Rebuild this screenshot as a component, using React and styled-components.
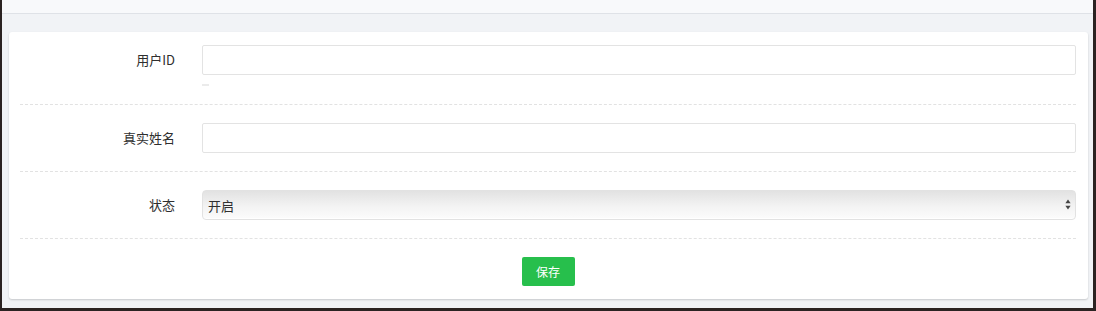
import styled, { createGlobalStyle } from 'styled-components';

const GlobalStyle = createGlobalStyle`
  html, body {
    margin: 0;
    padding: 0;
    background: #2b2322;
  }
  body {
    font-family: "Noto Sans CJK SC", "Noto Sans", sans-serif;
  }
`;

const Frame = styled.div`
  box-sizing: border-box;
  width: 1096px;
  height: 311px;
  border-left: 2px solid #2b2322;
  border-right: 3px solid #2b2322;
  border-bottom: 3px solid #2b2322;
  background: #f1f3f6;
  display: flex;
  flex-direction: column;
`;

const TopBar = styled.div`
  height: 13px;
  flex-shrink: 0;
  background: #f8f9fb;
  border-bottom: 1px solid #dfe2e7;
`;

const Content = styled.div`
  flex: 1;
  padding: 18px 5px 10px 7px;
  display: flex;
  flex-direction: column;
`;

const Card = styled.div`
  flex: 1;
  background: #fff;
  border-radius: 3px;
  box-shadow: 0 1px 2px rgba(0, 0, 0, 0.18);
  padding: 13px 12px 13px 11px;
`;

const FormGroup = styled.div`
  display: flex;
  align-items: flex-start;
  gap: 27px;
  padding-bottom: 18px;
  margin-bottom: 18px;
  border-bottom: 1px dashed #e2e2e2;
`;

const Label = styled.label`
  width: 155px;
  flex-shrink: 0;
  height: 30px;
  line-height: 30px;
  text-align: right;
  font-size: 13px;
  color: #2f2f2f;
`;

const Field = styled.div`
  flex: 1;
  display: flex;
  flex-direction: column;
`;

const Input = styled.input`
  box-sizing: border-box;
  width: 100%;
  height: 30px;
  border: 1px solid #e3e3e3;
  border-radius: 2px;
  background: #fff;
  outline: none;
  padding: 0 6px;
  font: inherit;
  font-size: 13px;
`;

const HelpDash = styled.div`
  margin-top: 9px;
  width: 7px;
  height: 2px;
  background: #ebebeb;
`;

const SelectWrap = styled.div`
  position: relative;
  height: 30px;
`;

const Select = styled.select`
  appearance: none;
  box-sizing: border-box;
  width: 100%;
  height: 30px;
  border: 1px solid #e2e2e2;
  border-radius: 4px;
  background: linear-gradient(to bottom, #e2e2e2 0%, #f3f3f3 55%, #fcfcfc 100%);
  box-shadow: inset 0 -1px 0 #fff;
  padding: 0 5px;
  font: inherit;
  font-size: 13px;
  color: #2f2f2f;
  outline: none;
`;

const Arrows = styled.svg`
  position: absolute;
  right: 5px;
  top: 9px;
  pointer-events: none;
`;

const Actions = styled.div`
  display: flex;
  justify-content: center;
`;

const SaveButton = styled.button`
  width: 53px;
  height: 29px;
  border: none;
  border-radius: 2px;
  background: #27bf4c;
  color: #fff;
  font: inherit;
  font-size: 12px;
  cursor: pointer;
`;

const App = () => {
  return (
    <>
      <GlobalStyle />
      <Frame>
        <TopBar />
        <Content>
          <Card>
            <FormGroup>
              <Label>用户ID</Label>
              <Field>
                <Input type="text" />
                <HelpDash />
              </Field>
            </FormGroup>
            <FormGroup>
              <Label>真实姓名</Label>
              <Field>
                <Input type="text" />
              </Field>
            </FormGroup>
            <FormGroup>
              <Label>状态</Label>
              <Field>
                <SelectWrap>
                  <Select defaultValue="1">
                    <option value="1">开启</option>
                    <option value="0">关闭</option>
                  </Select>
                  <Arrows width="6" height="11" viewBox="0 0 6 11">
                    <path d="M3 0.5 L5.6 4.3 H0.4 Z" fill="#444" />
                    <path d="M3 10.5 L5.6 6.7 H0.4 Z" fill="#444" />
                  </Arrows>
                </SelectWrap>
              </Field>
            </FormGroup>
            <Actions>
              <SaveButton type="button">保存</SaveButton>
            </Actions>
          </Card>
        </Content>
      </Frame>
    </>
  );
};

export default App;
